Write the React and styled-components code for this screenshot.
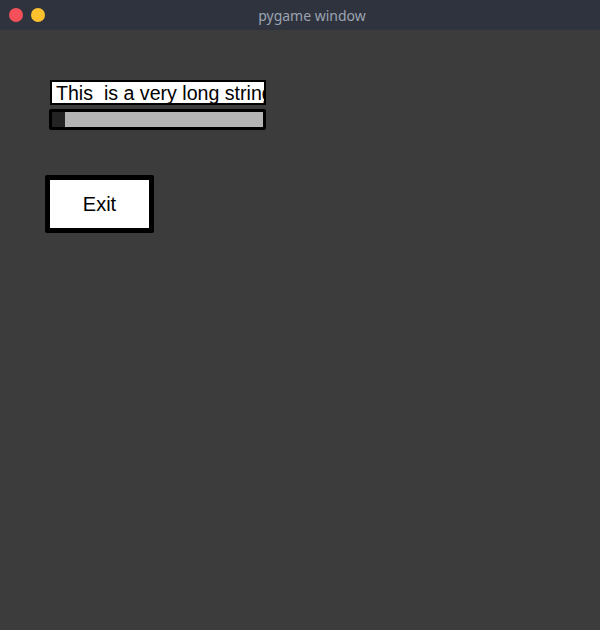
import React from "react";
import styled, { createGlobalStyle } from "styled-components";

const Global = createGlobalStyle`
  html, body { margin: 0; padding: 0; background: #3c3c3c; }
  #root { width: 600px; height: 630px; }
`;

const Window = styled.div`
  width: 600px;
  height: 630px;
  display: flex;
  flex-direction: column;
  background: #3c3c3c;
  overflow: hidden;
`;

const TitleBar = styled.div`
  height: 30px;
  flex: none;
  background: #2f333d;
  display: flex;
  align-items: center;
  padding-left: 9px;
  gap: 8px;
  position: relative;
`;

const Light = styled.span`
  width: 14px;
  height: 14px;
  border-radius: 50%;
  background: ${(p) => p.$color};
`;

const Title = styled.div`
  position: absolute;
  left: 0;
  right: 0;
  top: 0;
  height: 30px;
  line-height: 31px;
  text-align: center;
  padding-left: 24px;
  font-family: "Noto Sans", "DejaVu Sans", sans-serif;
  font-size: 14px;
  color: #9ba3b3;
  pointer-events: none;
`;

const Content = styled.div`
  display: flex;
  flex-direction: column;
  align-items: flex-start;
  padding: 50px 0 0 45px;
`;

const TextBox = styled.div`
  margin-left: 5px;
  width: 208px;
  height: 21px;
  border: 2px solid #000;
  background: #fff;
  overflow: hidden;
  white-space: pre;
  font-family: "Liberation Sans", Arial, sans-serif;
  font-size: 19.6px;
  line-height: 22px;
  color: #000;
  padding-left: 4px;
  box-sizing: content-box;
`;

const Slider = styled.div`
  margin-left: 4px;
  margin-top: 4px;
  width: 211px;
  height: 15px;
  border: 3px solid #000;
  border-radius: 2px;
  background: #b4b4b4;
  display: flex;
`;

const Handle = styled.div`
  width: 13px;
  height: 100%;
  background: #232323;
`;

const ExitButton = styled.div`
  margin-top: 45px;
  width: 99px;
  height: 48px;
  border: 5px solid #000;
  border-radius: 2px;
  background: #fff;
  display: flex;
  align-items: center;
  justify-content: center;
  font-family: "Liberation Sans", Arial, sans-serif;
  font-size: 20px;
  color: #000;
`;

export default function App() {
  return (
    <>
      <Global />
      <Window>
        <TitleBar>
          <Light $color="#f4505a" />
          <Light $color="#fdc12e" />
          <Title>pygame window</Title>
        </TitleBar>
        <Content>
          <TextBox>This  is a very long string</TextBox>
          <Slider>
            <Handle />
          </Slider>
          <ExitButton>Exit</ExitButton>
        </Content>
      </Window>
    </>
  );
}
